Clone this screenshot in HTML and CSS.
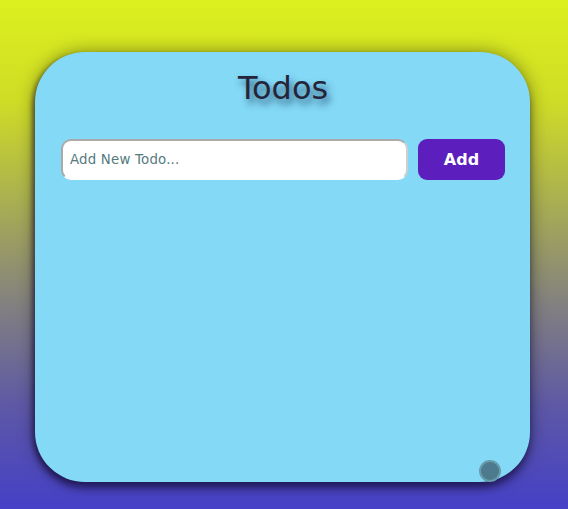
FILE: index.html
```html
<!DOCTYPE html>
<html lang="en">
<head>
<meta charset="utf-8">
<title>Todos</title>
<link rel="stylesheet" href="styles.css">
</head>
<body>
<main class="card">
  <h1 class="title">Todos</h1>
  <form class="add-form">
    <input class="add-input" type="text" placeholder="Add New Todo...">
    <button class="add-btn" type="button">Add</button>
  </form>
  <span class="dot"></span>
</main>
</body>
</html>
```

FILE: styles.css
```css
html, body {
  margin: 0;
  height: 100%;
}
body {
  background: linear-gradient(to bottom, #dcf01e 0%, #cfdc26 20%, #a9ae52 40%, #828080 60%, #5d58a6 80%, #4540c6 100%);
  padding: 52px 38px 0 35px;
  box-sizing: border-box;
  font-family: "DejaVu Sans", Verdana, sans-serif;
}
.card {
  position: relative;
  width: 495px;
  height: 430px;
  box-sizing: border-box;
  background: #84d9f7;
  border-radius: 50px;
  padding: 17px 25px 0 26px;
  box-shadow: 0 7px 6px rgba(20, 10, 60, 0.45), -3px 2px 4px rgba(20, 10, 40, 0.35), 0 0 18px rgba(0, 0, 0, 0.4);
}
.title {
  margin: 0;
  text-align: center;
  font-size: 32px;
  font-weight: normal;
  line-height: 38px;
  color: #24253a;
  text-shadow: 3px 5px 7px rgba(10, 40, 70, 0.7);
}
.add-form {
  display: flex;
  gap: 10px;
  margin-top: 32px;
}
.add-input {
  flex: 1;
  height: 41px;
  box-sizing: border-box;
  border: 2px solid #aaa;
  border-right-color: #cfcfcf;
  border-bottom-color: #fff;
  border-radius: 10px;
  background: #fff;
  padding: 0 7px;
  font-family: "DejaVu Sans", Verdana, sans-serif;
  font-size: 13.33px;
  letter-spacing: 0.2px;
  color: #333;
}
.add-input::placeholder {
  color: #557a80;
}
.add-btn {
  width: 87px;
  height: 41px;
  border: none;
  border-radius: 9px;
  background: #5c1fbe;
  color: #fff;
  font-family: "DejaVu Sans", Verdana, sans-serif;
  font-weight: bold;
  font-size: 16px;
}
.dot {
  position: absolute;
  right: 29px;
  bottom: 0;
  width: 18px;
  height: 18px;
  border-radius: 50%;
  background: #4e7a8d;
  border: 2px solid rgba(110, 165, 180, 0.8);
}
```
